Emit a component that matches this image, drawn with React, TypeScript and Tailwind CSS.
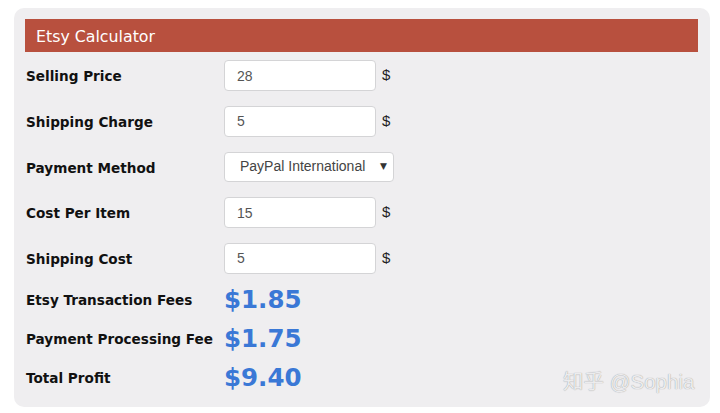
import React, { useState } from "react";

const label = "w-[199px] shrink-0 pl-px text-[13.6px] font-bold text-[#111]";
const inputCls =
  "w-[152px] h-[31px] px-3 text-[14px] text-[#555] bg-white border border-[#d4d4d6] rounded-[4px] focus:outline-none";

const App: React.FC = () => {
  const [price, setPrice] = useState("28");
  const [shipCharge, setShipCharge] = useState("5");
  const [method, setMethod] = useState("PayPal International");
  const [cost, setCost] = useState("15");
  const [shipCost, setShipCost] = useState("5");

  const fields = [
    { name: "Selling Price", value: price, set: setPrice },
    { name: "Shipping Charge", value: shipCharge, set: setShipCharge },
  ];
  const fields2 = [
    { name: "Cost Per Item", value: cost, set: setCost },
    { name: "Shipping Cost", value: shipCost, set: setShipCost },
  ];

  const results = [
    { name: "Etsy Transaction Fees", value: "$1.85" },
    { name: "Payment Processing Fee", value: "$1.75" },
    { name: "Total Profit", value: "$9.40" },
  ];

  const row = (f: { name: string; value: string; set: (v: string) => void }) => (
    <div key={f.name} className="flex items-center h-[31px]">
      <div className={label + " pt-[2px]"}>{f.name}</div>
      <input
        type="text"
        value={f.value}
        onChange={(e) => f.set(e.target.value)}
        className={inputCls}
        style={{ fontFamily: "'Liberation Sans', Arial, sans-serif" }}
      />
      <span className="ml-[6px] text-[15px] text-[#222] font-['Liberation_Sans',Arial,sans-serif]">
        $
      </span>
    </div>
  );

  return (
    <div className="w-[720px] h-[413px] bg-white pt-[8px] pl-[14px] font-['DejaVu_Sans',Verdana,sans-serif]">
      <div className="relative w-[696px] h-[399px] bg-[#efeef0] rounded-[10px] pt-[11px] pl-[11px] pr-[12px]">
        {/* 헤더 */}
        <div className="h-[33px] bg-[#b8503e] flex items-center pl-[11px] pt-[2px] text-white text-[15.8px]">
          Etsy Calculator
        </div>

        {/* 입력 */}
        <div className="mt-[8px] flex flex-col gap-[14.7px]">
          {fields.map(row)}
          <div className="flex items-center h-[31px]">
            <div className={label + " pt-[2px]"}>Payment Method</div>
            <div className="relative">
              <select
                value={method}
                onChange={(e) => setMethod(e.target.value)}
                className="appearance-none w-[170px] h-[30px] pl-[15px] text-[14px] text-[#444] bg-white border border-[#d4d4d6] rounded-[4px] focus:outline-none font-['Liberation_Sans',Arial,sans-serif]"
              >
                <option>PayPal International</option>
                <option>PayPal Domestic</option>
                <option>Etsy Payments</option>
              </select>
              <span className="pointer-events-none absolute right-[7px] top-[8px] text-[9px] text-[#333]">
                ▼
              </span>
            </div>
          </div>
          {fields2.map(row)}
        </div>

        {/* 결과 */}
        <div className="mt-[11px] flex flex-col gap-[9px]">
          {results.map((r) => (
            <div key={r.name} className="flex items-center h-[30px]">
              <div className={label + " pt-[1px]"}>{r.name}</div>
              <div className="text-[24.5px] font-bold text-[#3a78d6] leading-none">
                {r.value}
              </div>
            </div>
          ))}
        </div>

        {/* 워터마크 */}
        <div className="absolute left-[549px] top-[359px] text-[20.5px] text-[#ececee] [text-shadow:0_0_1px_#8a8a8a] font-['Liberation_Sans','Noto_Sans_CJK_SC',sans-serif]">
          知乎 @Sophia
        </div>
      </div>
    </div>
  );
};

export default App;
